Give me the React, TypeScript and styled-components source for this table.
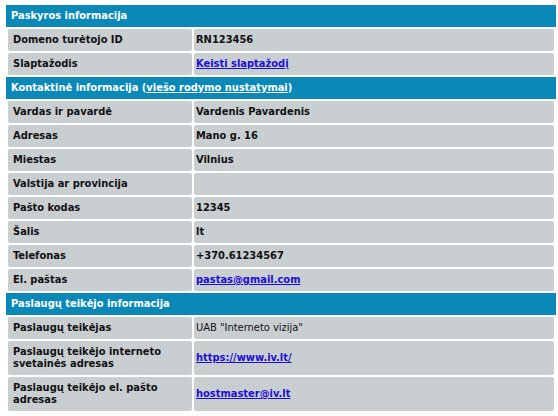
import React from "react";
import styled, { createGlobalStyle } from "styled-components";

const Global = createGlobalStyle`
  html, body { margin: 0; padding: 0; background: #ffffff; }
  body { font-family: "DejaVu Sans Condensed", "DejaVu Sans", Verdana, sans-serif; font-size: 11px; color: #111; }
`;

const Page = styled.div`
  padding: 5px 0 0 6px;
  width: 550px;
`;

const SectionHeader = styled.div`
  height: 22px;
  box-sizing: border-box;
  background: #0a88b8;
  color: #ffffff;
  font-weight: bold;
  font-size: 11px;
  line-height: 22px;
  padding-left: 5px;
  white-space: nowrap;
`;

const HeaderLink = styled.a`
  color: #ffffff;
  text-decoration: underline;
`;

const Table = styled.table`
  width: 550px;
  border-collapse: separate;
  border-spacing: 2px;
  table-layout: fixed;
`;

const Cell = styled.td<{ $label?: boolean; $light?: boolean }>`
  background: #c9ced1;
  border-radius: 2px;
  padding: ${(p) => (p.$label ? "5px 4px 5px 5px" : "5px 4px 5px 2px")};
  line-height: 12px;
  font-size: 11px;
  font-weight: ${(p) => (p.$light ? "normal" : "bold")};
  color: #111;
  vertical-align: middle;
  height: 12px;
`;

const Link = styled.a`
  color: #1c0fd6;
  text-decoration: underline;
  font-weight: bold;
`;

type Row = [React.ReactNode, React.ReactNode, boolean?];

const Section: React.FC<{ title: React.ReactNode; rows: Row[] }> = ({ title, rows }) => (
  <>
    <SectionHeader>{title}</SectionHeader>
    <Table>
      <colgroup>
        <col style={{ width: 184 }} />
        <col style={{ width: 360 }} />
      </colgroup>
      <tbody>
        {rows.map((r, i) => (
          <tr key={i}>
            <Cell $label>{r[0]}</Cell>
            <Cell $light={r[2]}>{r[1]}</Cell>
          </tr>
        ))}
      </tbody>
    </Table>
  </>
);

export default function App() {
  return (
    <Page>
      <Global />
      <Section
        title="Paskyros informacija"
        rows={[
          ["Domeno turėtojo ID", "RN123456"],
          ["Slaptažodis", <Link href="#">Keisti slaptažodį</Link>],
        ]}
      />
      <Section
        title={
          <>
            Kontaktinė informacija (<HeaderLink href="#">viešo rodymo nustatymai</HeaderLink>)
          </>
        }
        rows={[
          ["Vardas ir pavardė", "Vardenis Pavardenis"],
          ["Adresas", "Mano g. 16"],
          ["Miestas", "Vilnius"],
          ["Valstija ar provincija", ""],
          ["Pašto kodas", "12345"],
          ["Šalis", "lt"],
          ["Telefonas", "+370.61234567"],
          ["El. paštas", <Link href="#">pastas@gmail.com</Link>],
        ]}
      />
      <Section
        title="Paslaugų teikėjo informacija"
        rows={[
          ["Paslaugų teikėjas", 'UAB "Interneto vizija"', true],
          ["Paslaugų teikėjo interneto svetainės adresas", <Link href="#">https://www.iv.lt/</Link>],
          ["Paslaugų teikėjo el. pašto adresas", <Link href="#">hostmaster@iv.lt</Link>],
        ]}
      />
    </Page>
  );
}
